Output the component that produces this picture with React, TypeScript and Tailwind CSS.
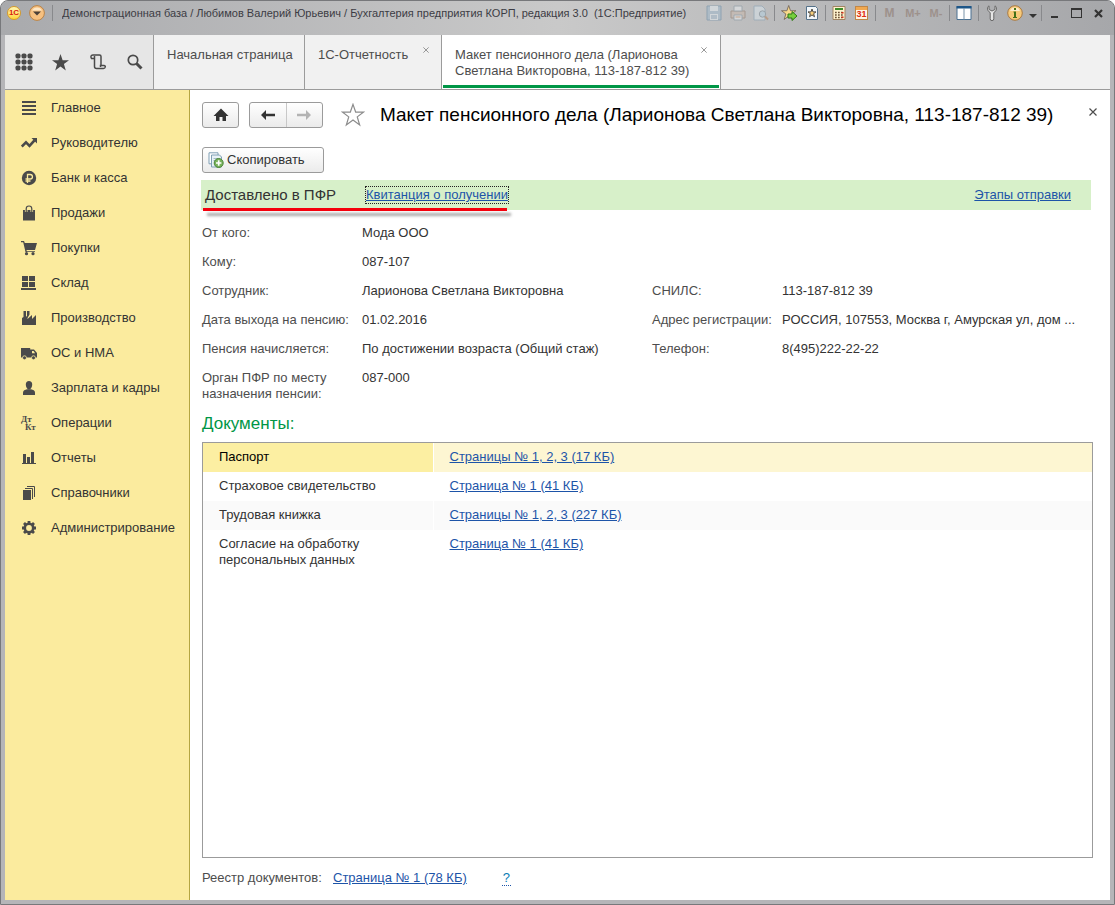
import { ReactNode } from 'react'

type IconProps = { children: ReactNode; className?: string; box?: string }

function Icon({ children, className = 'size-4', box = '0 0 16 16' }: IconProps) {
  return (
    <svg viewBox={box} className={`shrink-0 ${className}`} fill="currentColor" aria-hidden="true">
      {children}
    </svg>
  )
}

const starPath = 'M8 0l2 5.8h6l-4.8 3.6L13 15.5 8 11.8l-5 3.7 1.8-6.1L0 5.8h6z'

const sections: { label: string; icon: ReactNode }[] = [
  {
    label: 'Главное',
    icon: <Icon><path d="M1 1h14v2H1zM1 5h14v2H1zM1 9h14v2H1zM1 13h14v2H1z" /></Icon>,
  },
  {
    label: 'Руководителю',
    icon: (
      <Icon>
        <path d="M.8 11.5L5 7.3l3.500 3.500 5-5.500" fill="none" stroke="currentColor" strokeWidth="2.600" />
        <path d="M10.5 3H16v5.500z" />
      </Icon>
    ),
  },
  {
    label: 'Банк и касса',
    icon: (
      <Icon>
        <circle cx="8" cy="8" r="7.2" />
        <path d="M6.5 13V4.5h2.7a2.2 2.2 0 010 4.5H4.5M4.5 11h5" fill="none" stroke="#fbeb9e" strokeWidth="1.3" />
      </Icon>
    ),
  },
  {
    label: 'Продажи',
    icon: (
      <Icon>
        <path d="M2 5h12v10.5H2z" />
        <path d="M5.2 7V3.8a2.8 2.8 0 015.6 0V7" fill="none" stroke="#fbeb9e" strokeWidth="2.6" />
        <path d="M5.2 7.500V3.8a2.8 2.8 0 015.6 0v3.700" fill="none" stroke="currentColor" strokeWidth="1.2" />
      </Icon>
    ),
  },
  {
    label: 'Покупки',
    icon: (
      <Icon>
        <path d="M0 1h3l.8 2H16l-2 7H5.5l.3 1.3H14V12H4.5L2.2 2.2H0z" />
        <circle cx="5.5" cy="13.7" r="1.6" />
        <circle cx="12" cy="13.7" r="1.6" />
      </Icon>
    ),
  },
  {
    label: 'Склад',
    icon: <Icon><path d="M1 1h6v5H1zM8 1h6v5H8zM1 7h6v5H1zM8 7h6v5H8zM0 13h15v2H0z" /></Icon>,
  },
  {
    label: 'Производство',
    icon: <Icon><path d="M1 15V8l1.500-1V1H5v5l1 .8V1h2.500v3.500L6.500 8v1L11 5v4l4-4v10z" /></Icon>,
  },
  {
    label: 'ОС и НМА',
    icon: (
      <Icon>
        <path d="M0 3h9.200v9.500H0zM9.200 4.500H13L16 8v4.500H9.200z" />
        <path d="M11 6h1.600l1.500 2.200H11z" fill="#fbeb9e" />
        <circle cx="3.5" cy="12.800" r="2" stroke="#fbeb9e" strokeWidth=".8" />
        <circle cx="12.5" cy="12.800" r="2" stroke="#fbeb9e" strokeWidth=".8" />
      </Icon>
    ),
  },
  {
    label: 'Зарплата и кадры',
    icon: (
      <Icon>
        <path d="M8 1c2 0 3.2 1.3 3.2 3.4S10 9.500 8 9.500 4.800 6.500 4.800 4.400 6 1 8 1z" />
        <path d="M2 15v-2.500C2 10.500 4 9.800 6 9.300h4c2 .5 4 1.200 4 3.200V15z" />
      </Icon>
    ),
  },
  {
    label: 'Операции',
    icon: (
      <span className="flex h-4 w-4 shrink-0 flex-col font-['Liberation_Serif',serif] text-[9px] font-bold leading-[8px]" aria-hidden="true">
        <span>Дт</span>
        <span className="pl-1">Кт</span>
      </span>
    ),
  },
  {
    label: 'Отчеты',
    icon: <Icon><path d="M1 13h14v1H1zM2 4h3v9H2zM6 7h3v6H6zM10 2h3v11h-3z" /></Icon>,
  },
  {
    label: 'Справочники',
    icon: (
      <Icon>
        <path d="M2 5h8v10H2z" />
        <path d="M4 3.500h7.500V14M6 1.500h7.500V12" fill="none" stroke="currentColor" />
      </Icon>
    ),
  },
  {
    label: 'Администрирование',
    icon: (
      <Icon>
        <circle cx="8" cy="8" r="4.2" fill="none" stroke="currentColor" strokeWidth="2.6" />
        <path d="M8 1v3M8 12v3M1 8h3M12 8h3M3 3l2 2M11 11l2 2M3 13l2-2M11 5l2-2" stroke="currentColor" strokeWidth="2.8" />
      </Icon>
    ),
  },
]

const documents = [
  { name: 'Паспорт', pages: 'Страницы № 1, 2, 3 (17 КБ)', selected: true },
  { name: 'Страховое свидетельство', pages: 'Страница № 1 (41 КБ)' },
  { name: 'Трудовая книжка', pages: 'Страницы № 1, 2, 3 (227 КБ)' },
  { name: 'Согласие на обработку персональных данных', pages: 'Страница № 1 (41 КБ)' },
]

function Separator() {
  return <span className="mx-[2px] h-4 w-px shrink-0 bg-[#88898c]" />
}

function Tool({ label, width, children }: { label: string; width: string; children: ReactNode }) {
  return (
    <button type="button" aria-label={label} className={`flex h-6 shrink-0 items-center justify-center ${width}`}>
      {children}
    </button>
  )
}

function TitleBar() {
  return (
    <header className="flex h-[34px] items-start bg-linear-to-r from-[#a9aaad] via-[#c9c9c9] to-[#a6a7aa] pl-[5px] pr-[7px]">
      <Tool label="Меню" width="w-4">
        <span className="flex size-[14px] items-center justify-center rounded-full border border-[#d79b2b] bg-linear-to-b from-[#fff6b0] to-[#ffd630] text-[8px] font-bold leading-none text-[#d8200c]">
          1С
        </span>
      </Tool>
      <Tool label="Главное меню" width="ml-[7px] w-4">
        <Icon>
          <circle cx="8" cy="8" r="7.4" fill="#f6c080" stroke="#b98347" />
          <path d="M3 5.500a5.500 5 0 0110 0z" fill="#fde7c6" />
          <path d="M4 6.500h8l-4 4z" fill="#4b4038" />
        </Icon>
      </Tool>
      <span className="ml-[7px] mt-1 h-4 w-px bg-[#88898c]" />
      <h1 className="ml-[9px] min-w-0 flex-1 truncate text-[11px] leading-6 text-[#3c3c44]">
        Демонстрационная база / Любимов Валерий Юрьевич / Бухгалтерия предприятия КОРП, редакция 3.0&nbsp; (1С:Предприятие)
      </h1>
      <div className="flex h-6 items-center">
        <Tool label="Сохранить" width="w-6 opacity-50">
          <Icon>
            <path d="M1 1h14v14H1z" fill="#9db8cc" stroke="#6288a5" />
            <path d="M4 1h8v5H4zM4 9h8v6H4z" fill="#e4edf3" />
            <path d="M5 11h6M5 13h6" stroke="#6288a5" />
          </Icon>
        </Tool>
        <Tool label="Печать" width="w-6 opacity-50">
          <Icon>
            <path d="M1 6h14v7H1z" fill="#c9b8aa" stroke="#8d7565" />
            <path d="M4 1h8v5H4zM4 10h8v5H4z" fill="#edf0f3" stroke="#8595a0" />
            <path d="M5.500 12h5" stroke="#c98b5a" />
          </Icon>
        </Tool>
        <Tool label="Просмотр" width="w-[22px] opacity-50">
          <Icon>
            <path d="M1 1h8l3 3v11H1z" fill="#dbe7ef" stroke="#83a0b5" />
            <circle cx="9.500" cy="9" r="3.2" fill="#b6d3e4" stroke="#7b8b95" />
            <path d="M12 11.500l3 3" stroke="#b67f56" strokeWidth="2" />
          </Icon>
        </Tool>
        <Separator />
        <Tool label="Добавить в избранное" width="w-6">
          <Icon>
            <path d={starPath} transform="translate(.5 .5) scale(.9)" fill="#f9d98a" stroke="#76685a" />
            <path d="M7 9h4V6.500l5 4.500-5 4.500V13H7z" fill="#76cf3c" stroke="#2e7816" />
          </Icon>
        </Tool>
        <Tool label="Избранное" width="w-[22px]">
          <Icon>
            <path d="M2.500 1.500h9l2 2v11h-11z" fill="#f3f7fa" stroke="#55728a" />
            <path d={starPath} transform="translate(4 4) scale(.5)" fill="#f8cf78" stroke="#4f4a45" strokeWidth="2" />
          </Icon>
        </Tool>
        <Separator />
        <Tool label="Калькулятор" width="w-[22px]">
          <Icon>
            <path d="M2 1.500h12v13H2z" fill="#fff2cf" stroke="#a18463" />
            <path d="M4 3h8v2H4z" fill="#3e8d2b" />
            <path d="M4 7.500h8M4 10h8M4 12.500h8" stroke="#6b5136" strokeWidth="1.4" strokeDasharray="1.7 1.3" />
            <path d="M10.500 7h2v1.500h-2zM10.500 11.500h2V13h-2z" fill="#d62e1a" />
          </Icon>
        </Tool>
        <Tool label="Календарь" width="w-[23px]">
          <span className="flex h-[14px] w-[13px] flex-col border border-[#c08748] bg-[#fff6e8] text-center text-[9px] font-bold leading-[9px] text-[#e02c14]">
            <span className="h-[3px] shrink-0 bg-[#f0a850]" />
            31
          </span>
        </Tool>
        <Separator />
        <Tool label="M" width="w-[23px]">
          <span className="text-[12px] font-bold text-[#9d918c]">M</span>
        </Tool>
        <Tool label="M+" width="w-6">
          <span className="text-[11px] font-bold text-[#9d918c]">M+</span>
        </Tool>
        <Tool label="M-" width="w-[22px]">
          <span className="text-[11px] font-bold text-[#9d918c]">M-</span>
        </Tool>
        <Separator />
        <Tool label="Панели" width="w-6">
          <Icon>
            <path d="M1 1.500h14v13H1z" fill="#fdfefe" stroke="#4a7192" />
            <path d="M.5 1h15v2.500H.5z" fill="#1d5688" />
            <path d="M8 3v11.500" stroke="#7893a8" />
          </Icon>
        </Tool>
        <Separator />
        <Tool label="Сервис" width="w-[22px]">
          <Icon>
            <path d="M5 .8v3.700l3 1.500 3-1.500V.8c2 1.200 2.200 5-1.200 6.800v6.200a1.800 1.800 0 01-3.600 0V7.600C2.800 5.800 3 2 5 .8z" fill="#e6e6e6" stroke="#666" />
          </Icon>
        </Tool>
        <Tool label="Справка" width="w-6">
          <Icon>
            <circle cx="8" cy="8" r="7.3" fill="#f8ca7a" stroke="#a87a43" />
            <path d="M3 6a5.200 4.800 0 0110 0z" fill="#fdecc9" />
            <path d="M7 3h2v2H7zM6.500 6.500H9V12h1v1H6v-1h1V7.500h-.5z" fill="#447118" />
          </Icon>
        </Tool>
        <Tool label="Ещё" width="w-3">
          <Icon className="mt-1.5 h-1 w-2 text-[#333]" box="0 0 8 4"><path d="M0 0h8L4 4z" /></Icon>
        </Tool>
        <Separator />
        <Tool label="Свернуть" width="w-5">
          <span className="mt-2 h-[2px] w-[7px] bg-[#333]" />
        </Tool>
        <Tool label="Развернуть" width="w-[25px]">
          <span className="h-[10px] w-[11px] border border-t-2 border-[#333]" />
        </Tool>
        <Tool label="Закрыть" width="w-[18px]">
          <Icon className="size-[9px] text-[#333]" box="0 0 9 9">
            <path d="M1 1l7 7M8 1L1 8" stroke="currentColor" strokeWidth="2.2" />
          </Icon>
        </Tool>
      </div>
    </header>
  )
}

function CloseMark({ className }: { className: string }) {
  return (
    <Icon className={className} box="0 0 8 8">
      <path d="M.5.5l7 7M7.5.5l-7 7" stroke="currentColor" strokeWidth="1.2" />
    </Icon>
  )
}

function TabBar() {
  return (
    <div className="flex h-[55px] border-b border-[#9b9b9b] bg-[#f1f1f1] text-[13px] leading-4 text-[#4d4d4d]">
      <div className="flex w-[149px] shrink-0 items-center border-r border-[#9b9b9b] bg-[#e6e6e6] text-[#4a4a4a]">
        <button type="button" aria-label="Разделы" className="flex w-[37px] justify-center">
          <Icon className="size-[18px]" box="0 0 18 18">
            {[3, 9, 15].map((y) => [3, 9, 15].map((x) => <rect key={`${x}-${y}`} x={x - 2.5} y={y - 2.5} width="5" height="5" rx="1.8" />))}
          </Icon>
        </button>
        <button type="button" aria-label="Избранное" className="flex w-[37px] justify-center">
          <Icon className="size-[17px]"><path d={starPath} /></Icon>
        </button>
        <button type="button" aria-label="История" className="flex w-[37px] justify-center">
          <Icon>
            <path
              d="M4.500 4.500H1.500C0 1.500 2 1 3 1h6.500a1.500 1.500 0 011.500 1.500v9M4.500 2v10.500a2 2 0 002 2H13.500c2 0 2.500-3 .5-3h-3.500v1.500"
              fill="none"
              stroke="currentColor"
              strokeWidth="1.5"
            />
          </Icon>
        </button>
        <button type="button" aria-label="Поиск" className="flex w-[37px] justify-center">
          <Icon>
            <circle cx="6" cy="6" r="4.700" fill="none" stroke="currentColor" strokeWidth="1.7" />
            <path d="M9.500 9.500l5 5" stroke="currentColor" strokeWidth="3" />
          </Icon>
        </button>
      </div>
      <div className="w-[151px] shrink-0 border-r border-[#9b9b9b] pl-[13px] pt-3">
        <button type="button">Начальная страница</button>
      </div>
      <div className="flex w-[137px] shrink-0 items-start justify-between border-r border-[#9b9b9b] pl-[13px] pr-3 pt-3">
        <button type="button">1С-Отчетность</button>
        <button type="button" aria-label="Закрыть вкладку" className="text-[#8c8c8c]"><CloseMark className="size-[6px]" /></button>
      </div>
      <div className="flex w-[279px] shrink-0 border-r border-[#9b9b9b] bg-white px-px pb-px">
        <div className="flex flex-1 items-start justify-between border-b-[3px] border-[#009646] pl-3 pr-3 pt-3">
          <button type="button" className="w-[240px] text-left">
            Макет пенсионного дела (Ларионова Светлана Викторовна, 113-187-812 39)
          </button>
          <button type="button" aria-label="Закрыть вкладку" className="text-[#8c8c8c]"><CloseMark className="size-[6px]" /></button>
        </div>
      </div>
    </div>
  )
}

function Sidebar() {
  return (
    <nav className="w-[185px] shrink-0 border-r border-[#b5a642] bg-[#fbeb9e] text-[13px]">
      {sections.map(({ label, icon }) => (
        <a key={label} href="#" className="flex h-[35px] items-center gap-[14px] pl-4 pt-px text-[#333]">
          <span className="text-[#4a4a4a]">{icon}</span>
          {label}
        </a>
      ))}
    </nav>
  )
}

function Link({ children }: { children: ReactNode }) {
  return <a href="#" className="text-[#1d54a8] underline">{children}</a>
}

const buttonFace = 'rounded-[3px] border border-[#9b9b9b] bg-linear-to-b from-white to-[#ebebeb]'

function Field({ label, value }: { label: string; value: string }) {
  return (
    <>
      <dt className="min-h-[29px] pt-[6px]">{label}</dt>
      <dd className="whitespace-nowrap pt-[6px] text-[#333]">{value}</dd>
    </>
  )
}

export default function App() {
  return (
    <div className="flex min-h-screen flex-col overflow-hidden rounded-t-lg border border-[#77787b] bg-[#b5b5b8] font-['Liberation_Sans',Arial,sans-serif]">
      <TitleBar />
      <div className="mx-1 mb-1 flex flex-1 flex-col bg-white">
        <TabBar />
        <div className="flex flex-1">
          <Sidebar />
          <main className="flex min-w-0 flex-1 flex-col pb-[14px] pl-3 pr-[17px] text-[13px] leading-4 text-[#4d4d4d]">
            <div className="flex h-[50px] items-center">
              <button type="button" aria-label="Домой" className={`flex h-[26px] w-[37px] items-center justify-center text-[#333] ${buttonFace}`}>
                <Icon><path d="M8 1.500L15.500 9H13v5H9.500V10h-3v4H3V9H.5z" /></Icon>
              </button>
              <div className={`ml-[10px] flex h-[26px] w-[74px] ${buttonFace}`}>
                <button type="button" aria-label="Назад" className="flex flex-1 items-center justify-center border-r border-[#c8c8c8] text-[#333]">
                  <Icon><path d="M1 8l5-5v3.800h9v2.400H6V13z" /></Icon>
                </button>
                <button type="button" aria-label="Вперед" className="flex flex-1 items-center justify-center text-[#b3b3b3]">
                  <Icon><path d="M15 8l-5-5v3.800H1v2.400h9V13z" /></Icon>
                </button>
              </div>
              <button type="button" aria-label="В избранное" className="ml-[18px] text-[#8c8c8c]">
                <Icon className="size-6" box="-1 -1 18 18">
                  <path d={starPath} fill="white" stroke="currentColor" strokeWidth=".9" />
                </Icon>
              </button>
              <h2 className="ml-[15px] flex-1 truncate text-[19px] leading-6 text-black">
                Макет пенсионного дела (Ларионова Светлана Викторовна, 113-187-812 39)
              </h2>
              <button type="button" aria-label="Закрыть" className="-mr-1 mb-1.5 text-[#4d4d4d]"><CloseMark className="size-2" /></button>
            </div>

            <button type="button" className={`mt-[7px] flex h-[26px] w-[122px] items-center gap-[3px] pl-[5px] text-[#333] ${buttonFace}`}>
              <Icon>
                <path d="M1 .8h9v11H1z" fill="#fff" stroke="#7f9fb5" />
                <path d="M3.500 3h8l2 2v10h-10z" fill="#e8f1f6" stroke="#7f9fb5" />
                <path d="M5.500 6.500h5M5.500 8.500h3" stroke="#a5bccb" />
                <circle cx="10.700" cy="11" r="4.500" fill="#78b35b" stroke="#4c8539" />
                <path d="M10.700 8.300v5.400M8 11h5.400" stroke="#fff" strokeWidth="1.7" />
              </Icon>
              Скопировать
            </button>

            <div className="relative -ml-px mr-[2px] mt-[7px] flex h-[30px] items-center bg-[#d7f0c9] pl-1 pr-5">
              <span className="w-[161px] text-[15px] leading-5 text-[#333]">Доставлено в ПФР</span>
              <span className="outline outline-dotted outline-[#222]"><Link>Квитанция о получении</Link></span>
              <span className="ml-auto"><Link>Этапы отправки</Link></span>
              <span className="absolute -bottom-px left-[2px] h-[3px] w-[304px] bg-[#f5000c] shadow-[4px_5px_3px_rgba(0,0,0,0.35)]" />
            </div>

            <div className="mt-[9px] flex">
              <dl className="grid w-[450px] shrink-0 grid-cols-[160px_1fr] content-start">
                <Field label="От кого:" value="Мода ООО" />
                <Field label="Кому:" value="087-107" />
                <Field label="Сотрудник:" value="Ларионова Светлана Викторовна" />
                <Field label="Дата выхода на пенсию:" value="01.02.2016" />
                <Field label="Пенсия начисляется:" value="По достижении возраста (Общий стаж)" />
                <Field label="Орган ПФР по месту назначения пенсии:" value="087-000" />
              </dl>
              <dl className="mt-[58px] grid min-w-0 flex-1 grid-cols-[130px_1fr] content-start">
                <Field label="СНИЛС:" value="113-187-812 39" />
                <Field label="Адрес регистрации:" value="РОССИЯ, 107553, Москва г, Амурская ул, дом ..." />
                <Field label="Телефон:" value="8(495)222-22-22" />
              </dl>
            </div>

            <h3 className="mt-3 text-[17px] leading-5 text-[#009646]">Документы:</h3>

            <div className="mt-2 flex-1 border border-[#9b9b9b]">
              <table className="w-full table-fixed text-left text-[#333]">
                <colgroup>
                  <col className="w-[230px]" />
                  <col />
                </colgroup>
                <tbody>
                  {documents.map(({ name, pages, selected }) => (
                    <tr key={name} className={`align-top ${selected ? 'bg-[#fdf6d2] text-black' : 'odd:bg-[#fafafa]'}`}>
                      <td className={`border-r border-white pb-[7px] pl-4 pr-10 pt-[6px] ${selected ? 'bg-[#fcefa2]' : ''}`}>{name}</td>
                      <td className="pb-[7px] pl-4 pt-[6px]"><Link>{pages}</Link></td>
                    </tr>
                  ))}
                </tbody>
              </table>
            </div>

            <footer className="mt-3 flex">
              <span className="w-[131px]">Реестр документов:</span>
              <Link>Страница № 1 (78 КБ)</Link>
              <button type="button" aria-label="Подсказка" className="ml-[35px] h-4 border-b border-dotted border-[#1d54a8] px-px text-[#0a7cb5]">?</button>
            </footer>
          </main>
        </div>
      </div>
    </div>
  )
}
